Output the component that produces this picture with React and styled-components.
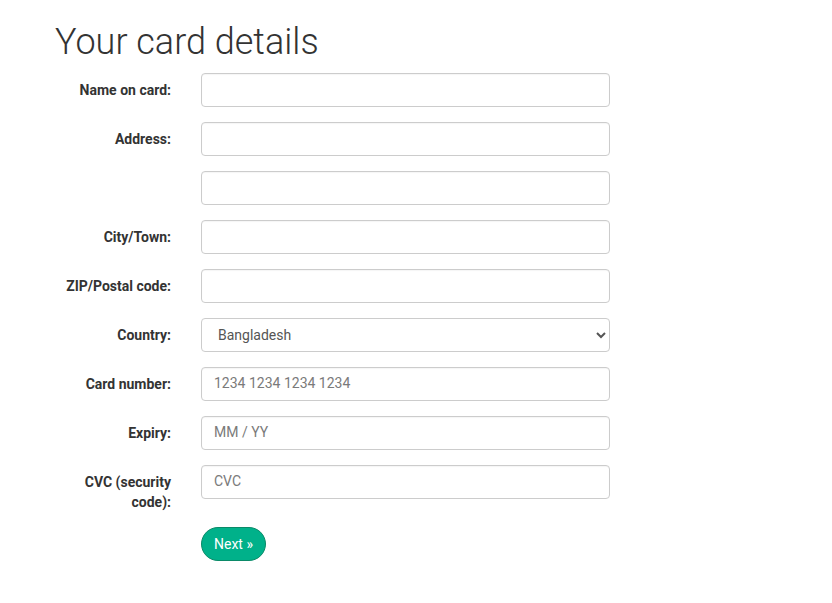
import React from "react"
import styled, { createGlobalStyle } from "styled-components"

const GlobalStyle = createGlobalStyle`
    body {
        margin: 0;
        background: #fff;
        font-family: Roboto, "Liberation Sans", sans-serif;
        font-size: 14px;
        line-height: 20px;
        color: #333;
    }
`

const Page = styled.div`
    padding: 23px 0 40px 40px;
`

const Title = styled.h1`
    margin: 0 0 10px 15px;
    font-size: 36px;
    font-weight: 300;
    line-height: 39.6px;
    color: #333;
`

const Form = styled.form`
    display: flex;
    flex-direction: column;
    gap: 15px;
`

const Row = styled.div`
    display: grid;
    grid-template-columns: 131px 409px;
    column-gap: 30px;
    align-items: start;
`

const Label = styled.label`
    padding: 7px 0 0 15px;
    text-align: right;
    font-weight: 700;
    color: #333;
`

const Input = styled.input`
    box-sizing: border-box;
    width: 100%;
    height: 34px;
    padding: ${(p) => (p.$card ? "6px 12px 8px" : "6px 12px")};
    border: 1px solid #ccc;
    border-radius: 4px;
    font-family: inherit;
    font-size: 14px;
    color: #555;
    background: #fff;
    box-shadow: inset 0 1px 1px rgba(0, 0, 0, 0.04);
    &::placeholder {
        color: #7a7a7a;
    }
`

const Select = styled.select`
    box-sizing: border-box;
    width: 100%;
    height: 34px;
    padding: 6px 8px 6px 12px;
    border: 1px solid #ccc;
    border-radius: 4px;
    font-family: inherit;
    font-size: 14px;
    color: #555;
    background: #fff;
`

const NextBtn = styled.button`
    width: 65px;
    height: 34px;
    padding: 0;
    border: 1px solid #0b8a68;
    border-radius: 17px;
    background: #00b18a;
    color: #fff;
    font-family: inherit;
    font-size: 14px;
`

const fields = [
    { label: "Name on card:" },
    { label: "Address:" },
    { label: "" },
    { label: "City/Town:" },
    { label: "ZIP/Postal code:" },
]

const cardFields = [
    { label: "Card number:", placeholder: "1234 1234 1234 1234" },
    { label: "Expiry:", placeholder: "MM / YY" },
    { label: "CVC (security code):", placeholder: "CVC" },
]

const App = () => {
    return (
        <Page>
            <GlobalStyle />
            <Title>Your card details</Title>
            <Form onSubmit={(e) => e.preventDefault()}>
                {fields.map((f, i) => (
                    <Row key={i}>
                        <Label>{f.label}</Label>
                        <Input type="text" />
                    </Row>
                ))}
                <Row>
                    <Label>Country:</Label>
                    <Select defaultValue="BD">
                        <option value="BD">Bangladesh</option>
                    </Select>
                </Row>
                {cardFields.map((f) => (
                    <Row key={f.label}>
                        <Label>{f.label}</Label>
                        <Input $card type="text" placeholder={f.placeholder} />
                    </Row>
                ))}
                <Row>
                    <span />
                    <div>
                        <NextBtn type="submit">Next »</NextBtn>
                    </div>
                </Row>
            </Form>
        </Page>
    )
}

export default App
